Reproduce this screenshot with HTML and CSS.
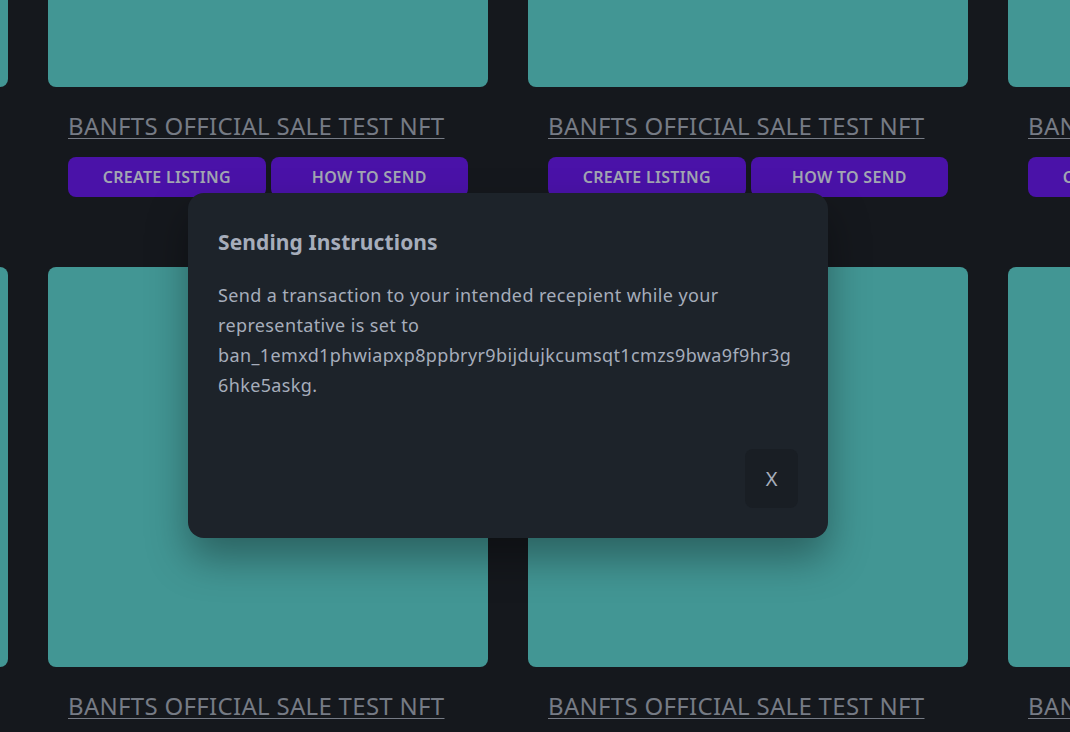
FILE: index.html
```html
<!DOCTYPE html>
<html>
<head>
<meta charset="utf-8">
<link rel="stylesheet" href="styles.css">
</head>
<body>
<div class="page">
  <div class="grid">
    <div class="card"><div class="img"></div><div class="body"><a class="title" href="#">BANFTS OFFICIAL SALE TEST NFT</a><div class="btns"><button class="btn">CREATE LISTING</button><button class="btn">HOW TO SEND</button></div></div></div>
    <div class="card"><div class="img"></div><div class="body"><a class="title" href="#">BANFTS OFFICIAL SALE TEST NFT</a><div class="btns"><button class="btn">CREATE LISTING</button><button class="btn">HOW TO SEND</button></div></div></div>
    <div class="card"><div class="img"></div><div class="body"><a class="title" href="#">BANFTS OFFICIAL SALE TEST NFT</a><div class="btns"><button class="btn">CREATE LISTING</button><button class="btn">HOW TO SEND</button></div></div></div>
    <div class="card"><div class="img"></div><div class="body"><a class="title" href="#">BANFTS OFFICIAL SALE TEST NFT</a><div class="btns"><button class="btn">CREATE LISTING</button><button class="btn">HOW TO SEND</button></div></div></div>
    <div class="card"><div class="img"></div><div class="body"><a class="title" href="#">BANFTS OFFICIAL SALE TEST NFT</a><div class="btns"><button class="btn">CREATE LISTING</button><button class="btn">HOW TO SEND</button></div></div></div>
    <div class="card"><div class="img"></div><div class="body"><a class="title" href="#">BANFTS OFFICIAL SALE TEST NFT</a><div class="btns"><button class="btn">CREATE LISTING</button><button class="btn">HOW TO SEND</button></div></div></div>
    <div class="card"><div class="img"></div><div class="body"><a class="title" href="#">BANFTS OFFICIAL SALE TEST NFT</a><div class="btns"><button class="btn">CREATE LISTING</button><button class="btn">HOW TO SEND</button></div></div></div>
    <div class="card"><div class="img"></div><div class="body"><a class="title" href="#">BANFTS OFFICIAL SALE TEST NFT</a><div class="btns"><button class="btn">CREATE LISTING</button><button class="btn">HOW TO SEND</button></div></div></div>
  </div>
</div>
<div class="modal">
  <h3 class="modal-title">Sending Instructions</h3>
  <p class="modal-text">Send a transaction to your intended recepient while your representative is set to ban_1emxd1phwiapxp8ppbryr9bijdujkcumsqt1cmzs9bwa9f9hr3g6hke5askg.</p>
  <div class="modal-actions"><button class="close">x</button></div>
</div>
</body>
</html>
```
FILE: styles.css
```css
* { box-sizing: border-box; }
html, body { margin: 0; height: 100%; overflow: hidden; }
body {
  background: #15181d;
  font-family: "Noto Sans", "Open Sans", sans-serif;
  color: #9ea3ae;
}
.page { margin-top: -313px; margin-left: -432px; }
.grid {
  display: grid;
  grid-template-columns: repeat(4, 440px);
  column-gap: 40px;
  row-gap: 50px;
}
.card { display: flex; flex-direction: column; }
.img { height: 400px; background: #429694; border-radius: 8px; }
.body { padding: 20px; display: flex; flex-direction: column; align-items: flex-start; }
.title {
  font-size: 24px;
  line-height: 37px;
  letter-spacing: 0.3px;
  color: #767b85;
  text-decoration: underline;
  text-decoration-thickness: 1px;
  text-underline-offset: 3px;
}
.btns { display: flex; gap: 5px; margin-top: 13px; width: 400px; }
.btn {
  flex: 1;
  height: 40px;
  border: none;
  border-radius: 8px;
  background: #4a12a8;
  color: #a2a6b2;
  font-family: inherit;
  font-size: 16px;
  letter-spacing: 0.3px;
  font-weight: 600;
}
.modal {
  position: absolute;
  left: 188px;
  top: 193px;
  width: 640px;
  height: 345px;
  background: #1d232a;
  border-radius: 16px;
  padding: 30px;
  display: flex;
  flex-direction: column;
  box-shadow: 0 20px 40px rgba(0,0,0,0.35);
  color: #a6adbb;
}
.modal-title { margin: 0; font-size: 21px; line-height: 38px; font-weight: 700; letter-spacing: 0.1px; }
.modal-text {
  margin: 19px 0 0;
  font-size: 18px;
  line-height: 30px;
  letter-spacing: 0.37px;
  overflow-wrap: break-word;
}
.modal-actions { margin-top: auto; display: flex; justify-content: flex-end; }
.close {
  width: 53px;
  height: 59px;
  border: none;
  border-radius: 8px;
  background: #191e24;
  color: #a6adbb;
  font-family: inherit;
  font-size: 20px;
  text-transform: uppercase;
}
```
